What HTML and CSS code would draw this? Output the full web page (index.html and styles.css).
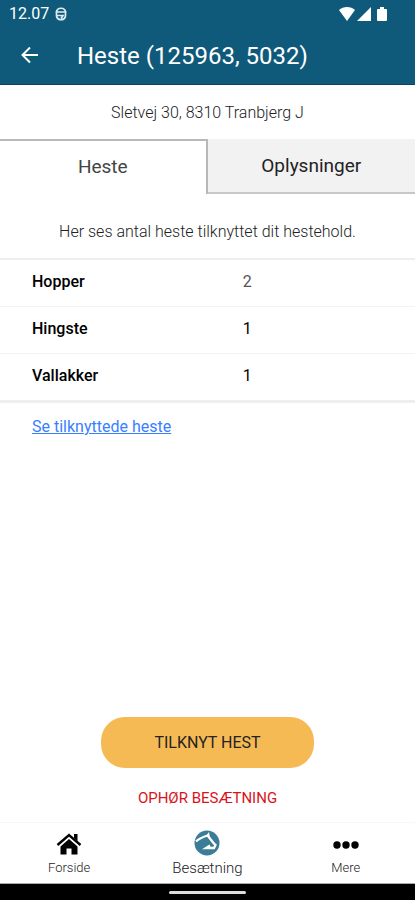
FILE: index.html
```html
<!DOCTYPE html>
<html lang="da">
<head>
    <meta charset="UTF-8">
    <meta name="viewport" content="width=device-width, initial-scale=1.0">
    <title>Heste</title>
    <link rel="stylesheet" href="styles.css">
</head>
<body>
    <header class="top">
        <div class="status-bar">
            <span>12.07</span>
            <svg class="status-app" width="12" height="14" viewBox="0 0 12 14" fill="none" stroke="#dcebf2" stroke-width="1.700">
                <path d="M1.500 5C2 0 10 0 10.500 5M0.500 5h11M10.500 5v4c-1 5-8 5-9 0V5M2 8.500h6l-2 3"/>
            </svg>
            <div class="status-icons">
                <svg width="16" height="14" viewBox="0 0 16 14" fill="#fff"><path d="M0 3C4-1 12-1 16 3L8 14z"/></svg>
                <svg width="14" height="14" viewBox="0 0 14 14" fill="#fff"><path d="M14 0v14H0z"/></svg>
                <svg class="battery" width="10" height="14" viewBox="0 0 10 14" fill="#fff"><path d="M3 0h4v2h2q1 0 1 1v10q0 1-1 1H1q-1 0-1-1V3q0-1 1-1h2z"/></svg>
            </div>
        </div>
        <div class="title-bar">
            <button class="back-btn" aria-label="Tilbage">
                <svg width="18" height="18" viewBox="0 0 18 18" fill="none" stroke="#fff" stroke-width="2"><path d="M17 8H2M9 0.500L1.500 8L9 15.500"/></svg>
            </button>
            <h1>Heste (125963, 5032)</h1>
        </div>
    </header>

    <main>
        <p class="address">Sletvej 30, 8310 Tranbjerg J</p>
        <div class="tabs" role="tablist">
            <button class="tab active" role="tab" aria-selected="true">Heste</button>
            <button class="tab" role="tab" aria-selected="false">Oplysninger</button>
        </div>
        <p class="intro">Her ses antal heste tilknyttet dit hestehold.</p>
        <table class="horses">
            <tr><th scope="row">Hopper</th><td class="muted">2</td></tr>
            <tr><th scope="row">Hingste</th><td>1</td></tr>
            <tr><th scope="row">Vallakker</th><td>1</td></tr>
        </table>
        <a class="horses-link" href="#">Se tilknyttede heste</a>

        <div class="actions">
            <button class="primary-btn">TILKNYT HEST</button>
            <button class="danger-btn">OPHØR BESÆTNING</button>
        </div>
    </main>

    <nav class="bottom-nav">
        <a href="#">
            <svg width="26" height="26" viewBox="0 0 26 26">
                <path d="M18 4h3.500v7L18 8z"/>
                <path d="M1.500 15L13 5L24.500 15" fill="none" stroke="#000" stroke-width="2.400"/>
                <path d="M13 9L21.500 16.500v8H15.500v-6h-5v6H4.500v-8z"/>
            </svg>
            <span>Forside</span>
        </a>
        <a class="current" href="#">
            <svg width="26" height="26" viewBox="0 0 26 26">
                <circle cx="13" cy="13" r="12.500" fill="#3b7c96"/>
                <path d="M2 11.500C5 8.500 9 7 13.500 5.500C16 8 18 12 21.500 15L20 18H12L16 15.500" fill="none" stroke="#fff" stroke-width="2.300"/>
                <path d="M12 6L15 2L16 8z" fill="#fff"/>
            </svg>
            <span>Besætning</span>
        </a>
        <a href="#">
            <svg width="26" height="26" viewBox="0 0 26 26">
                <circle cx="4" cy="15" r="3.700"/>
                <circle cx="13" cy="15" r="3.700"/>
                <circle cx="22" cy="15" r="3.700"/>
            </svg>
            <span>Mere</span>
        </a>
    </nav>
    <div class="gesture-bar"><span></span></div>
</body>
</html>
```
FILE: styles.css
```css
* {
    box-sizing: border-box;
}
body {
    margin: 0;
    min-height: 100vh;
    display: flex;
    flex-direction: column;
    background-color: #fff;
    color: #222;
    font-family: Roboto, "Liberation Sans", sans-serif;
    font-size: 16px;
    line-height: 20px;
}
button {
    border: none;
    padding: 0;
    background: none;
    color: inherit;
    font-family: inherit;
    cursor: pointer;
}
svg {
    display: block;
}

/* Header */
.top {
    background-color: #0f5a7a;
    border-bottom: 1px solid #0a4563;
    color: #fff;
}
.status-bar {
    display: flex;
    align-items: center;
    height: 27px;
    padding: 0 28px 0 9px;
}
.status-app {
    margin-left: 6px;
}
.status-icons {
    display: flex;
    gap: 2px;
    margin-left: auto;
}
.battery {
    margin-left: 4px;
}
.title-bar {
    display: flex;
    align-items: center;
    gap: 38px;
    height: 57px;
    padding: 0 21px;
}
h1 {
    margin: 0;
    font-size: 24px;
    font-weight: 400;
    line-height: 28px;
}

/* Content */
main {
    flex: 1;
    display: flex;
    flex-direction: column;
}
.address {
    margin: 18px 0 16px;
    text-align: center;
    font-weight: 300;
}
.tabs {
    display: grid;
    grid-template-columns: 1fr 1fr;
}
.tab {
    height: 55px;
    background-color: #f2f2f2;
    border-bottom: 2px solid #c8c8c8;
    font-size: 19px;
    font-weight: 400;
}
.tab.active {
    padding-bottom: 3px;
    background-color: #fff;
    border-top: 2px solid #b8b8b8;
    border-right: 2px solid #b8b8b8;
    border-bottom: none;
    color: #444;
}
.intro {
    margin: 28px 0 16px;
    text-align: center;
    font-weight: 300;
}
.horses {
    width: 100%;
    border-collapse: collapse;
    border-top: 2px solid #eee;
    border-bottom: 3px solid #eee;
    color: #000;
}
.horses tr + tr {
    border-top: 1px solid #f3f3f3;
}
.horses th {
    width: 58%;
    padding: 12px 0 14px 32px;
    text-align: left;
    font-weight: 500;
}
.horses td {
    padding: 12px 0 14px 2px;
}
.horses .muted {
    color: #555;
}
.horses-link {
    align-self: flex-start;
    margin: 14px 32px;
    color: #3880ff;
}

/* Actions */
.actions {
    display: flex;
    flex-direction: column;
    align-items: center;
    gap: 20px;
    margin-top: auto;
    padding-bottom: 14px;
}
.primary-btn {
    height: 51px;
    padding: 0 53px;
    border-radius: 24px;
    background-color: #f6ba55;
    font-size: 16px;
}
.danger-btn {
    color: #d8141c;
    font-size: 15px;
    line-height: 20px;
}

/* Bottom navigation */
.bottom-nav {
    display: grid;
    grid-template-columns: 1fr 1fr 1fr;
    height: 62px;
    border-top: 1px solid #f7f7f7;
    border-bottom: 1px solid #aaa;
}
.bottom-nav a {
    display: flex;
    flex-direction: column;
    align-items: center;
    gap: 2px;
    padding-top: 7px;
    color: #222;
    font-size: 13px;
    font-weight: 300;
    text-decoration: none;
}
.bottom-nav .current {
    font-size: 15px;
}
.gesture-bar {
    display: flex;
    justify-content: center;
    height: 16px;
    padding-top: 7px;
    background-color: #000;
}
.gesture-bar span {
    width: 77px;
    height: 3px;
    border-radius: 2px;
    background-color: #ddd;
}
```
